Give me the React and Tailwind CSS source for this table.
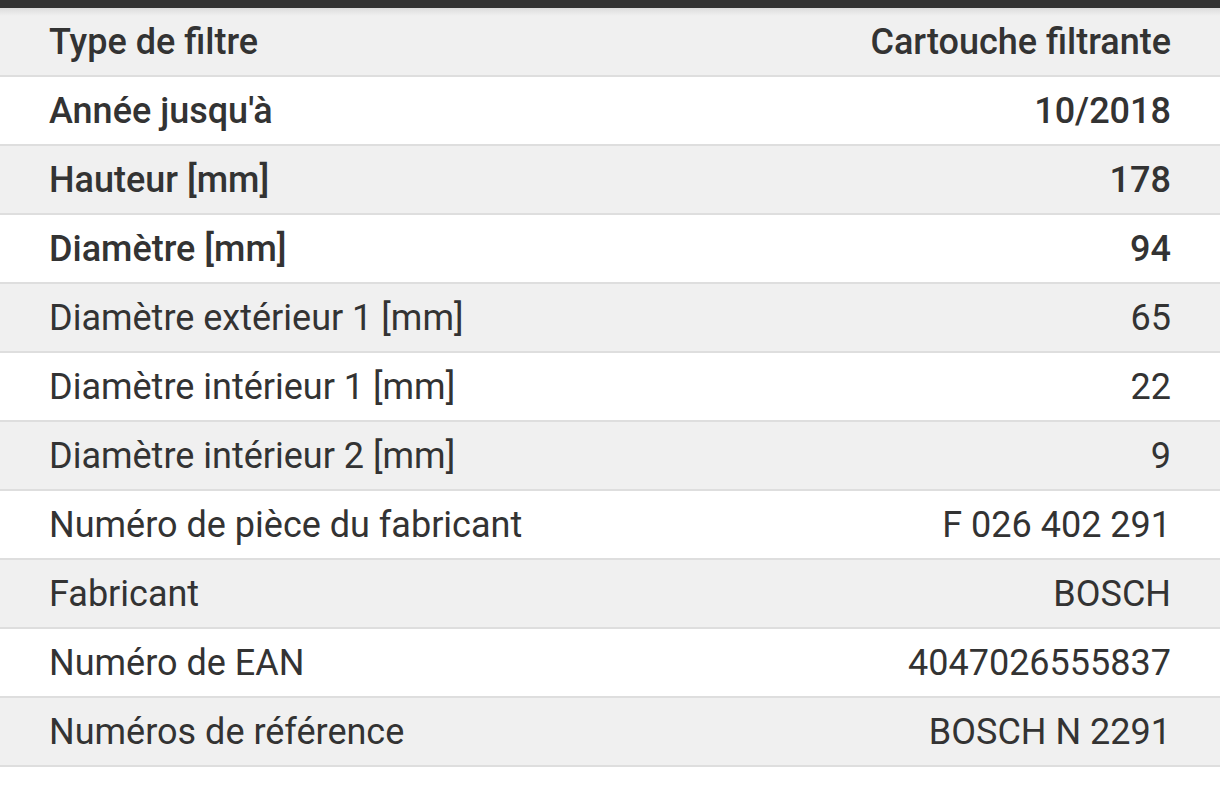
const rows = [
  { label: "Type de filtre", value: "Cartouche filtrante", strong: true },
  { label: "Année jusqu'à", value: "10/2018", strong: true },
  { label: "Hauteur [mm]", value: "178", strong: true },
  { label: "Diamètre [mm]", value: "94", strong: true },
  { label: "Diamètre extérieur 1 [mm]", value: "65" },
  { label: "Diamètre intérieur 1 [mm]", value: "22" },
  { label: "Diamètre intérieur 2 [mm]", value: "9" },
  { label: "Numéro de pièce du fabricant", value: "F 026 402 291" },
  { label: "Fabricant", value: "BOSCH" },
  { label: "Numéro de EAN", value: "4047026555837" },
  { label: "Numéros de référence", value: "BOSCH N 2291" },
];

export default function App() {
  return (
    <div className="min-h-screen bg-white font-['Roboto',sans-serif] text-[#333]">
      <div className="relative h-2 bg-[#333]">
        <div className="absolute left-0 right-0 top-2 h-2 bg-gradient-to-b from-[#dcdcdc] to-transparent" />
      </div>
      <div>
        {rows.map((row, i) => (
          <div
            key={row.label}
            className={`flex h-[69px] items-center justify-between border-b-2 border-[#dedede] px-[49px] text-[36px] ${
              i % 2 === 0 ? "bg-[#f0f0f0]" : "bg-white"
            } ${row.strong ? "font-medium" : "font-normal"}`}
          >
            <span>{row.label}</span>
            <span>{row.value}</span>
          </div>
        ))}
      </div>
    </div>
  );
}
